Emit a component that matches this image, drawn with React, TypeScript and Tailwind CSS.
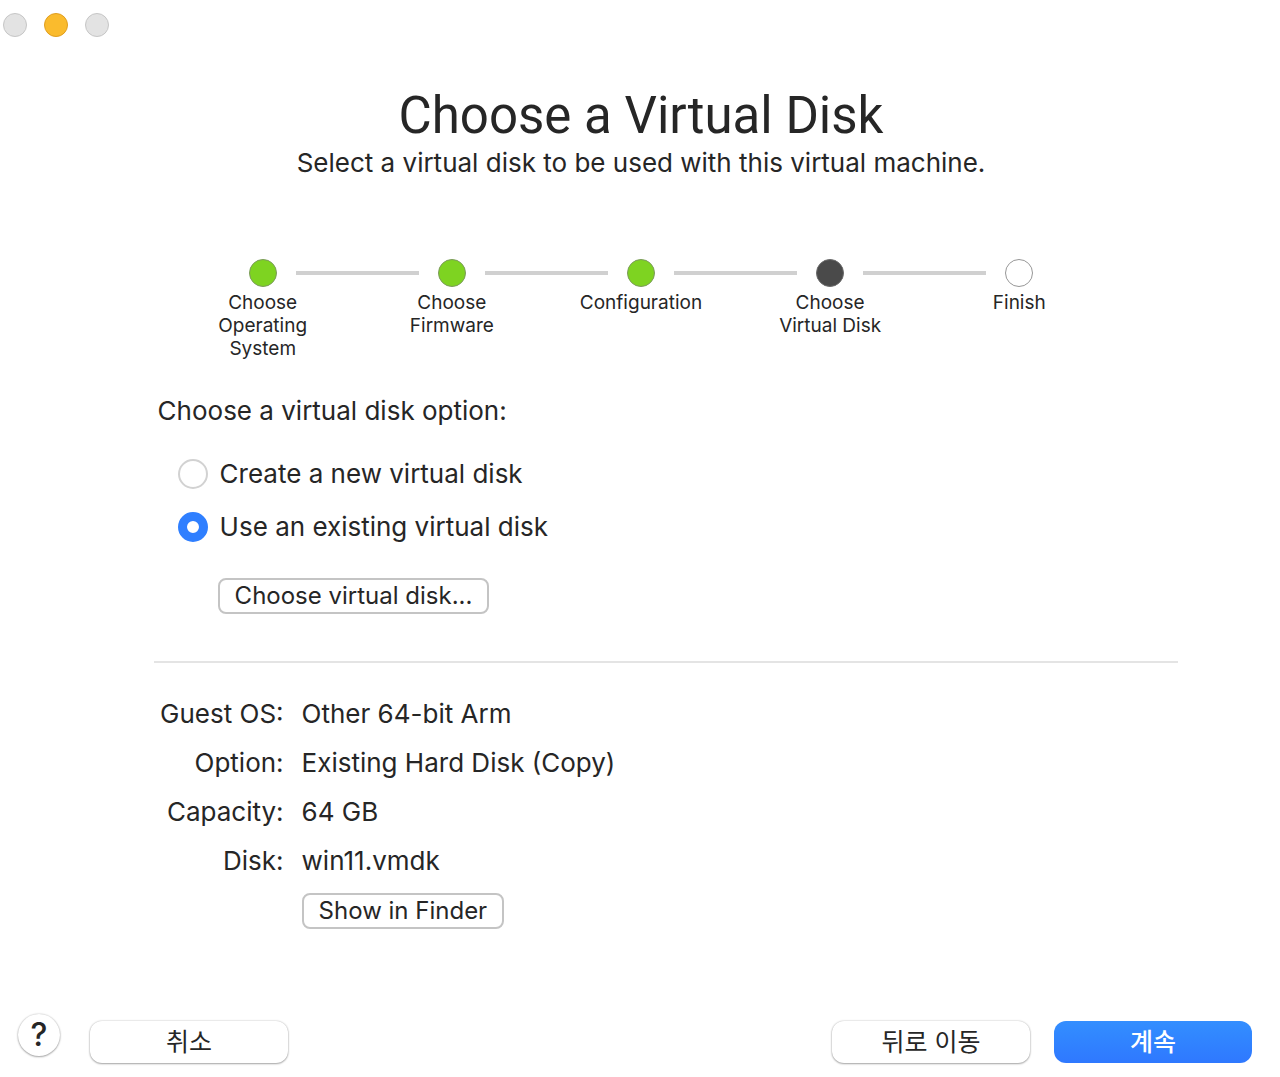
import React, { useState } from "react";
import clsx from "clsx";

type StepStatus = "done" | "current" | "pending";
type DiskOption = "create" | "existing";

const steps: { label: string; status: StepStatus }[] = [
  { label: "Choose Operating System", status: "done" },
  { label: "Choose Firmware", status: "done" },
  { label: "Configuration", status: "done" },
  { label: "Choose Virtual Disk", status: "current" },
  { label: "Finish", status: "pending" },
];

const diskOptions: { value: DiskOption; label: string }[] = [
  { value: "create", label: "Create a new virtual disk" },
  { value: "existing", label: "Use an existing virtual disk" },
];

const details = [
  { term: "Guest OS:", value: "Other 64-bit Arm" },
  { term: "Option:", value: "Existing Hard Disk (Copy)" },
  { term: "Capacity:", value: "64 GB" },
  { term: "Disk:", value: "win11.vmdk" },
];

function WindowControls() {
  return (
    <div className="flex gap-[17px] px-[3px] pt-[13px]">
      <button type="button" aria-label="Close" className="size-6 rounded-full border border-[#c6c6c6] bg-[#e3e3e3]" />
      <button type="button" aria-label="Minimize" className="size-6 rounded-full border border-[#e09e1f] bg-[#fabb2d]" />
      <button type="button" aria-label="Zoom" className="size-6 rounded-full border border-[#c6c6c6] bg-[#e3e3e3]" />
    </div>
  );
}

function Stepper() {
  return (
    <ol className="mx-auto mt-20 grid w-[74%] grid-cols-5">
      {steps.map((step, i) => (
        <li key={step.label} className="flex flex-col items-center" aria-current={step.status === "current" ? "step" : undefined}>
          {/* each cell draws half of the connector on either side of its dot */}
          <div className="flex w-full items-center gap-[19px]">
            <span className={clsx("h-1 flex-1", i > 0 && "bg-[#d0d0d0]")} />
            <span
              className={clsx(
                "size-7 rounded-full border",
                step.status === "done" && "border-[#7c9a5c] bg-[#7ed321]",
                step.status === "current" && "border-[#6a6a6a] bg-[#4a4a4a]",
                step.status === "pending" && "border-[#979797] bg-white"
              )}
            />
            <span className={clsx("h-1 flex-1", i < steps.length - 1 && "bg-[#d0d0d0]")} />
          </div>
          <span className="mt-1 w-32 text-center text-[19px] leading-[23px]">{step.label}</span>
        </li>
      ))}
    </ol>
  );
}

interface SmallButtonProps {
  children: React.ReactNode;
  className?: string;
}

function SmallButton({ children, className }: SmallButtonProps) {
  return (
    <button
      type="button"
      className={clsx("h-9 rounded-lg border-2 border-[#c4c4c4] bg-white px-[15px] text-2xl leading-8", className)}
    >
      {children}
    </button>
  );
}

export default function App() {
  const [option, setOption] = useState<DiskOption>("existing");

  return (
    <div className="flex min-h-screen flex-col bg-white font-['Inter','Noto_Sans_CJK_KR',sans-serif] text-[26px] leading-8 text-[#262626]">
      <WindowControls />

      <header className="mt-12 pl-0.5 text-center">
        <h1 className="font-['Roboto',sans-serif] text-[51px] leading-[62px]">Choose a Virtual Disk</h1>
        <p>Select a virtual disk to be used with this virtual machine.</p>
      </header>

      <div className="pl-0.5">
        <Stepper />
      </div>

      <main className="mt-[35px] w-full pr-[8%] pl-[12%]">
        <fieldset className="px-1">
          <legend>Choose a virtual disk option:</legend>
          <div className="mt-[31px] flex flex-col gap-[21px] pl-5">
            {diskOptions.map((item) => (
              <label key={item.value} className="flex items-center gap-3">
                <input
                  type="radio"
                  name="disk-option"
                  value={item.value}
                  checked={option === item.value}
                  onChange={() => setOption(item.value)}
                  className="size-[30px] appearance-none rounded-full border-2 border-[#d2d2d2] bg-white checked:border-9 checked:border-[#2f7fff]"
                />
                {item.label}
              </label>
            ))}
          </div>
        </fieldset>
        <SmallButton className="mt-[35px] ml-16">Choose virtual disk...</SmallButton>

        <hr className="mt-[47px] border-t-2 border-[#e4e4e4]" />

        <dl className="mt-[35px] grid grid-cols-[130px_1fr] gap-x-[18px] gap-y-[17px]">
          {details.map((row) => (
            <React.Fragment key={row.term}>
              <dt className="text-right">{row.term}</dt>
              <dd>{row.value}</dd>
            </React.Fragment>
          ))}
        </dl>
        <SmallButton className="mt-4 ml-[148px]">Show in Finder</SmallButton>
      </main>

      <footer className="mt-auto flex items-center gap-6 pr-7 pb-[7px] pl-[18px] text-[25px]">
        <div className="mr-auto flex items-center gap-[30px]">
          <button
            type="button"
            aria-label="Help"
            className="mb-3.5 size-[42px] rounded-full bg-white text-[32px] leading-none font-medium shadow-[0_0_2px_rgba(0,0,0,0.25),0_1px_2px_rgba(0,0,0,0.3)]"
          >
            ?
          </button>
          <button
            type="button"
            className="h-[42px] w-[198px] rounded-xl bg-white shadow-[0_0_2px_rgba(0,0,0,0.25),0_1px_2px_rgba(0,0,0,0.3)]"
          >
            취소
          </button>
        </div>
        <button
          type="button"
          className="h-[42px] w-[198px] rounded-xl bg-white shadow-[0_0_2px_rgba(0,0,0,0.25),0_1px_2px_rgba(0,0,0,0.3)]"
        >
          뒤로 이동
        </button>
        <button type="button" className="h-[42px] w-[198px] rounded-xl bg-linear-to-b from-[#338eff] to-[#2f78ff] font-medium text-white">
          계속
        </button>
      </footer>
    </div>
  );
}
